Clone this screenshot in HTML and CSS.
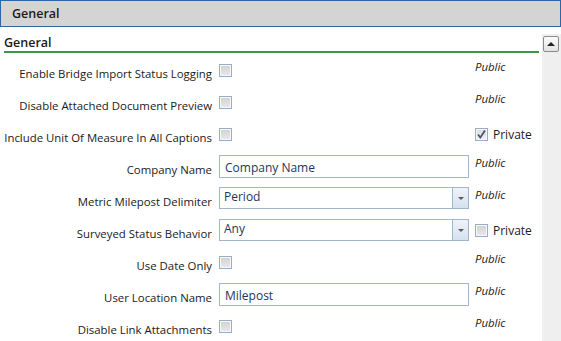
FILE: index.html
```html
<!DOCTYPE html>
<html lang="en">
<head>
    <meta charset="UTF-8">
    <title>General Settings</title>
    <link rel="stylesheet" href="styles.css">
</head>
<body>
    <div class="header">General</div>
    <div class="panel">
        <div class="content">
            <h2 class="section">General</h2>

            <div class="row">
                <div class="label">Enable Bridge Import Status Logging</div>
                <div class="control"><span class="check"></span></div>
                <div class="access">Public</div>
            </div>
            <div class="row">
                <div class="label">Disable Attached Document Preview</div>
                <div class="control"><span class="check"></span></div>
                <div class="access">Public</div>
            </div>
            <div class="row">
                <div class="label">Include Unit Of Measure In All Captions</div>
                <div class="control"><span class="check"></span></div>
                <div class="private">
                    <span class="check checked">
                        <svg width="11" height="11" viewBox="0 0 11 11"><path d="M2 5.5 L4.3 8.5 L9 1.5" fill="none" stroke="#4a5670" stroke-width="1.8"/></svg>
                    </span>
                    <span>Private</span>
                </div>
            </div>
            <div class="row">
                <div class="label">Company Name</div>
                <div class="control"><div class="input">Company Name</div></div>
                <div class="access">Public</div>
            </div>
            <div class="row">
                <div class="label">Metric Milepost Delimiter</div>
                <div class="control">
                    <div class="combo"><span class="value">Period</span><span class="drop"><i class="arrow"></i></span></div>
                </div>
                <div class="access">Public</div>
            </div>
            <div class="row">
                <div class="label">Surveyed Status Behavior</div>
                <div class="control">
                    <div class="combo"><span class="value">Any</span><span class="drop"><i class="arrow"></i></span></div>
                </div>
                <div class="private">
                    <span class="check"></span>
                    <span>Private</span>
                </div>
            </div>
            <div class="row">
                <div class="label">Use Date Only</div>
                <div class="control"><span class="check"></span></div>
                <div class="access">Public</div>
            </div>
            <div class="row">
                <div class="label">User Location Name</div>
                <div class="control"><div class="input">Milepost</div></div>
                <div class="access">Public</div>
            </div>
            <div class="row">
                <div class="label">Disable Link Attachments</div>
                <div class="control"><span class="check"></span></div>
                <div class="access">Public</div>
            </div>
        </div>
        <div class="scrollbar">
            <div class="scroll-up"><i class="up"></i></div>
        </div>
    </div>
</body>
</html>
```

FILE: styles.css
```css
body {
    margin: 0;
    font-family: "Open Sans", "Noto Sans", sans-serif;
    font-size: 11.4px;
    color: #1a1a1a;
    background: #fff;
    overflow: hidden;
}
.header {
    height: 25px;
    line-height: 25px;
    padding-left: 11px;
    background: #d4d4d4;
    border: 1px solid #2d66a6;
    font-size: 12.5px;
    font-weight: 600;
}
.panel {
    display: flex;
    margin-top: 7px;
    height: 307px;
}
.content {
    width: 542px;
}
.section {
    margin: 0 3px 0 4px;
    height: 17px;
    line-height: 17px;
    font-size: 12.5px;
    font-weight: 600;
    border-bottom: 2px solid #3a9a46;
}
.row {
    display: flex;
    align-items: center;
    height: 32px;
}
.row:first-of-type {
    margin-top: 1px;
}
.label {
    width: 212px;
    margin-right: 7px;
    padding-top: 7px;
    text-align: right;
    white-space: nowrap;
}
.control {
    width: 250px;
    display: flex;
    align-items: center;
}
.access {
    margin-left: 6px;
    padding-bottom: 7px;
    font-style: italic;
}
.private {
    margin-left: 6px;
    display: flex;
    align-items: center;
    gap: 5px;
    font-size: 12px;
}
.check {
    width: 11px;
    height: 11px;
    border: 1px solid #97adc9;
    background: linear-gradient(#d2d2d2, #e9e9e9);
    box-shadow: inset 0 0 0 1px #f8f8f8;
    display: flex;
    align-items: center;
    justify-content: center;
}
.check.checked {
    background: linear-gradient(#dcdcdc, #f0f0f0);
}
.input {
    width: 250px;
    height: 23px;
    line-height: 19px;
    padding: 2px 0 0 5px;
    box-sizing: border-box;
    border: 1px solid #a3b6cf;
    color: #1e3659;
    font-size: 12px;
}
.combo {
    width: 250px;
    height: 22px;
    border: 1px solid #a3b6cf;
    box-sizing: border-box;
    display: flex;
    color: #1e3659;
    font-size: 12px;
}
.combo .value {
    flex: 1;
    line-height: 18px;
    padding-left: 4px;
}
.drop {
    width: 15px;
    border-left: 1px solid #a3b6cf;
    background: linear-gradient(#eef3f9, #d6e1ee);
    display: flex;
    align-items: center;
    justify-content: center;
}
.arrow {
    width: 0;
    height: 0;
    border-left: 3px solid transparent;
    border-right: 3px solid transparent;
    border-top: 3px solid #5a5a5a;
}
.scrollbar {
    width: 19px;
    background: #efefef;
}
.scroll-up {
    width: 14px;
    height: 14px;
    margin: 2px 0 0 1px;
    border: 1px solid #8a8a8a;
    border-radius: 2px;
    background: linear-gradient(#fbfbfb, #e2e2e2);
    display: flex;
    align-items: center;
    justify-content: center;
}
.up {
    width: 0;
    height: 0;
    border-left: 4px solid transparent;
    border-right: 4px solid transparent;
    border-bottom: 4px solid #222;
}
```
